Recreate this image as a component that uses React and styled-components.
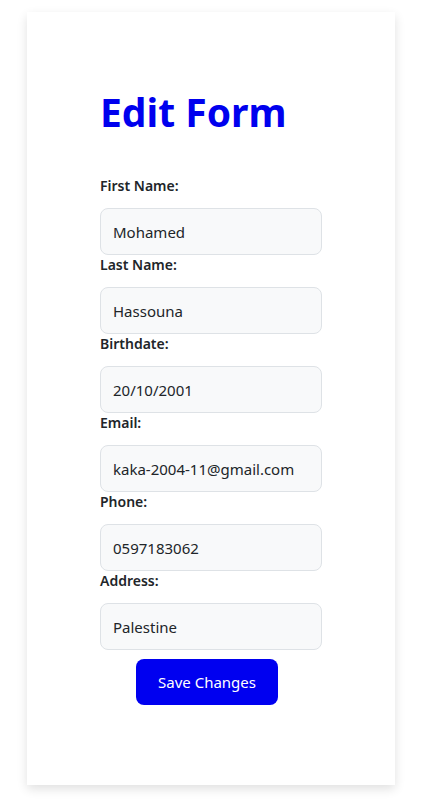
import styled, { createGlobalStyle } from "styled-components";

const GlobalStyle = createGlobalStyle`
  body {
    margin: 0;
    background: #ffffff;
    font-family: "Noto Sans", "Open Sans", sans-serif;
  }
`;

const Page = styled.div`
  padding: 12px 0 15px 27px;
`;

const Card = styled.div`
  width: 368px;
  height: 773px;
  box-sizing: border-box;
  background: #ffffff;
  box-shadow: 0 4px 10px rgba(0, 0, 0, 0.12);
  padding-top: 76px;
`;

const Form = styled.form`
  width: 222px;
  margin: 0 auto;
  display: flex;
  flex-direction: column;
`;

const Title = styled.h1`
  margin: 0 0 40px;
  font-size: 39px;
  line-height: 48px;
  font-weight: 700;
  color: #0000ee;
`;

const Label = styled.label`
  display: block;
  font-size: 14px;
  line-height: 20px;
  font-weight: 600;
  color: #212529;
  margin-bottom: 12px;
`;

const Input = styled.input`
  box-sizing: border-box;
  width: 100%;
  height: 47px;
  padding: 0 12px;
  border: 1px solid #dee2e6;
  border-radius: 8px;
  background: #f8f9fa;
  font-family: inherit;
  font-size: 15px;
  color: #212529;
`;

const Button = styled.button`
  align-self: center;
  margin: 9px 8px 0 0;
  width: 142px;
  height: 46px;
  border: none;
  border-radius: 8px;
  background: #0000f0;
  color: #ffffff;
  font-family: inherit;
  font-size: 15px;
`;

const fields = [
  { id: "first", label: "First Name:", value: "Mohamed" },
  { id: "last", label: "Last Name:", value: "Hassouna" },
  { id: "birth", label: "Birthdate:", value: "20/10/2001" },
  { id: "email", label: "Email:", value: "kaka-2004-11@gmail.com" },
  { id: "phone", label: "Phone:", value: "0597183062" },
  { id: "address", label: "Address:", value: "Palestine" },
];

export default function App() {
  return (
    <>
      <GlobalStyle />
      <Page>
        <Card>
          <Form onSubmit={(e) => e.preventDefault()}>
            <Title>Edit Form</Title>
            {fields.map((f) => (
              <div key={f.id}>
                <Label htmlFor={f.id}>{f.label}</Label>
                <Input id={f.id} defaultValue={f.value} />
              </div>
            ))}
            <Button type="submit">Save Changes</Button>
          </Form>
        </Card>
      </Page>
    </>
  );
}
